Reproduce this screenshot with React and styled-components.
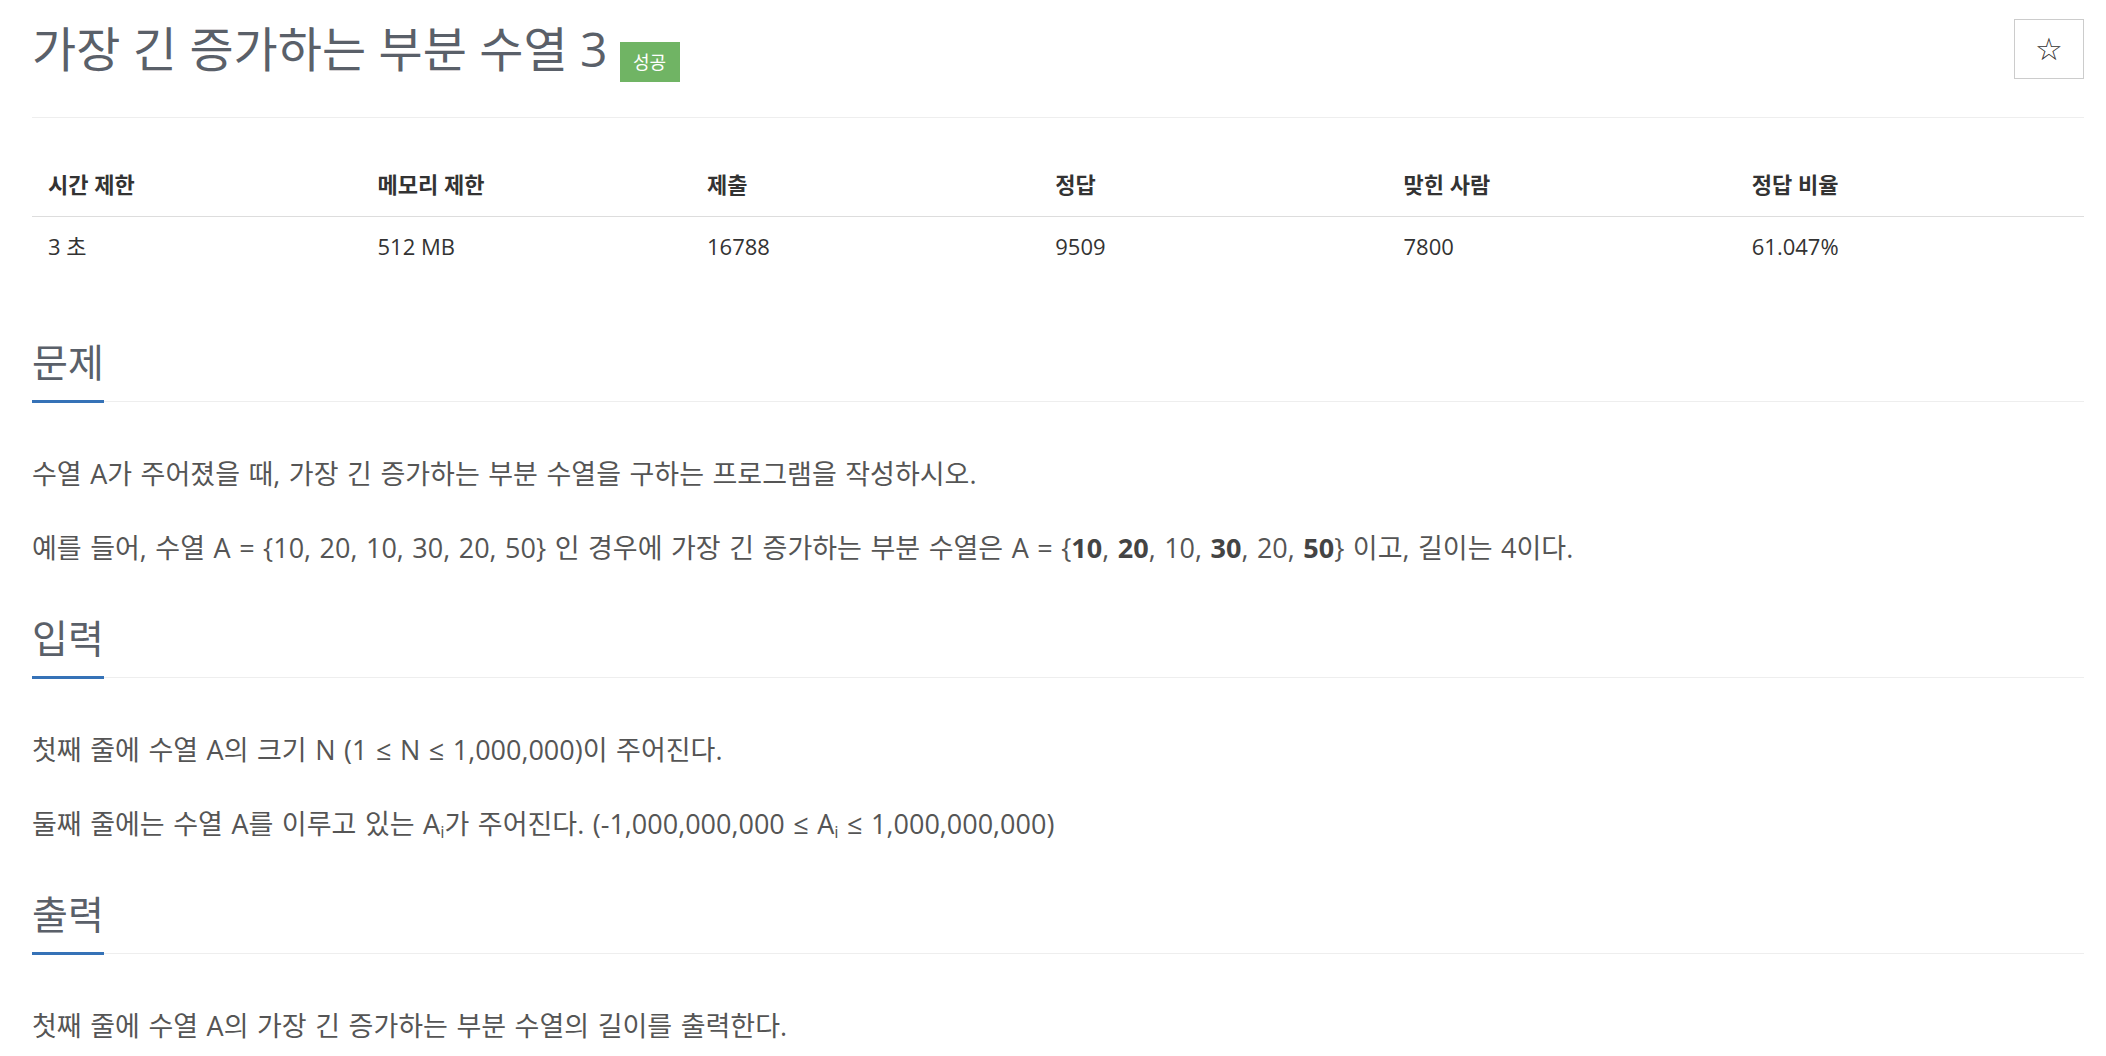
import React from "react";
import styled, { createGlobalStyle } from "styled-components";

const Global = createGlobalStyle`
  html, body { margin: 0; padding: 0; background: #fff; }
  body { font-family: "Open Sans", "Noto Sans CJK KR", sans-serif; color: #555; }
`;

const Page = styled.div`
  padding: 19px 22px 0 32px;
`;

const HeaderRow = styled.div`
  display: flex;
  align-items: center;
  justify-content: space-between;
  height: 60px;
`;

const Title = styled.h1`
  margin: 0;
  font-size: 48px;
  font-weight: 400;
  line-height: 60px;
  color: #5a6069;
  display: flex;
  align-items: center;
`;

const Badge = styled.span`
  display: inline-flex;
  align-items: center;
  justify-content: center;
  width: 60px;
  height: 40px;
  margin-left: 12px;
  margin-top: 26px;
  background: #70b464;
  color: #fff;
  font-size: 18px;
  line-height: 1;
`;

const StarButton = styled.button`
  width: 70px;
  height: 60px;
  border: 1px solid #ccc;
  background: #fff;
  color: #333;
  font-family: "DejaVu Sans", sans-serif;
  font-size: 31px;
  display: flex;
  align-items: center;
  justify-content: center;
  padding: 0;
`;

const Rule = styled.hr`
  margin: 38px 0 0;
  border: 0;
  border-top: 1px solid #eee;
`;

const Table = styled.table`
  width: 100%;
  border-collapse: collapse;
  margin-top: 39px;
  table-layout: fixed;
`;

const Th = styled.th`
  text-align: left;
  font-size: 22px;
  font-weight: 700;
  color: #333;
  line-height: 28px;
  padding: 13px 16px 18px;
  border-bottom: 1px solid #ddd;
  width: ${(p) => p.$w};
`;

const Td = styled.td`
  font-size: 22px;
  color: #333;
  line-height: 28px;
  padding: 15px 16px 11px;
`;

const Section = styled.section`
  margin-top: ${(p) => p.$top}px;
`;

const Heading = styled.h2`
  margin: 0;
  font-size: 39px;
  font-weight: 400;
  line-height: 44px;
  color: #5a6069;
  border-bottom: 1px solid #eee;
  display: flex;
`;

const HeadingText = styled.span`
  display: inline-block;
  padding-bottom: 16px;
  border-bottom: 3px solid #3572b7;
  margin-bottom: -2px;
`;

const Body = styled.div`
  display: flex;
  flex-direction: column;
  gap: 34px;
  padding-top: 52px;
`;

const Para = styled.p`
  margin: 0;
  font-size: 27px;
  line-height: 40px;
  word-spacing: 1.5px;
  color: #555;

  strong { font-weight: 700; color: #444; }
  sub { font-size: 17px; vertical-align: -4px; line-height: 0; }
`;

const stats = [
  ["시간 제한", "3 초", "16%"],
  ["메모리 제한", "512 MB", "16%"],
  ["제출", "16788", "17%"],
  ["정답", "9509", "17%"],
  ["맞힌 사람", "7800", "17%"],
  ["정답 비율", "61.047%", "17%"],
];

export default function App() {
  return (
    <>
      <Global />
      <Page>
        <HeaderRow>
          <Title>
            가장 긴 증가하는 부분 수열 3<Badge>성공</Badge>
          </Title>
          <StarButton aria-label="즐겨찾기">☆</StarButton>
        </HeaderRow>
        <Rule />
        <Table>
          <thead>
            <tr>
              {stats.map(([h, , w]) => (
                <Th key={h} $w={w}>{h}</Th>
              ))}
            </tr>
          </thead>
          <tbody>
            <tr>
              {stats.map(([h, v]) => (
                <Td key={h}>{v}</Td>
              ))}
            </tr>
          </tbody>
        </Table>

        <Section $top={69}>
          <Heading><HeadingText>문제</HeadingText></Heading>
          <Body>
            <Para>수열 A가 주어졌을 때, 가장 긴 증가하는 부분 수열을 구하는 프로그램을 작성하시오.</Para>
            <Para>
              예를 들어, 수열 A = {"{"}10, 20, 10, 30, 20, 50{"}"} 인 경우에 가장 긴 증가하는 부분 수열은 A = {"{"}
              <strong>10</strong>, <strong>20</strong>, 10, <strong>30</strong>, 20, <strong>50</strong>
              {"}"} 이고, 길이는 4이다.
            </Para>
          </Body>
        </Section>

        <Section $top={48}>
          <Heading><HeadingText>입력</HeadingText></Heading>
          <Body>
            <Para>첫째 줄에 수열 A의 크기 N (1 ≤ N ≤ 1,000,000)이 주어진다.</Para>
            <Para>
              둘째 줄에는 수열 A를 이루고 있는 A<sub>i</sub>가 주어진다. (-1,000,000,000 ≤ A<sub>i</sub> ≤ 1,000,000,000)
            </Para>
          </Body>
        </Section>

        <Section $top={48}>
          <Heading><HeadingText>출력</HeadingText></Heading>
          <Body>
            <Para>첫째 줄에 수열 A의 가장 긴 증가하는 부분 수열의 길이를 출력한다.</Para>
          </Body>
        </Section>
      </Page>
    </>
  );
}
